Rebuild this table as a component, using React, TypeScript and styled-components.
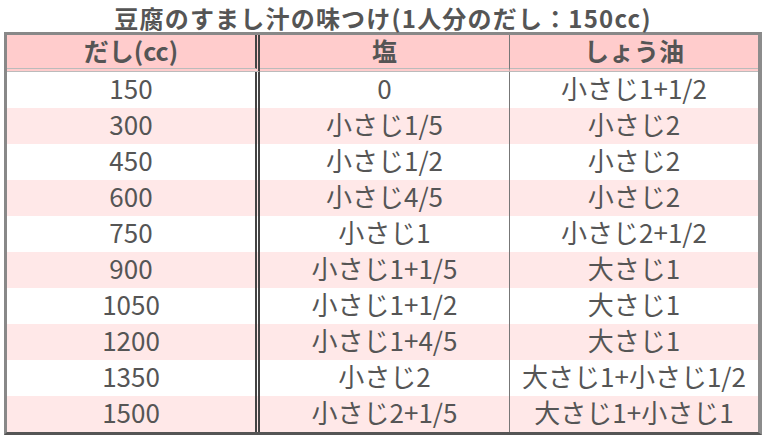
import React from "react";
import styled, { createGlobalStyle } from "styled-components";

type Row = [string, string, string];

const rows: Row[] = [
  ["150", "0", "小さじ1+1/2"],
  ["300", "小さじ1/5", "小さじ2"],
  ["450", "小さじ1/2", "小さじ2"],
  ["600", "小さじ4/5", "小さじ2"],
  ["750", "小さじ1", "小さじ2+1/2"],
  ["900", "小さじ1+1/5", "大さじ1"],
  ["1050", "小さじ1+1/2", "大さじ1"],
  ["1200", "小さじ1+4/5", "大さじ1"],
  ["1350", "小さじ2", "大さじ1+小さじ1/2"],
  ["1500", "小さじ2+1/5", "大さじ1+小さじ1"],
];

const App = () => {
  return (
    <>
      <GlobalStyle />
      <Page>
        <Title>豆腐のすまし汁の味つけ(1人分のだし：150cc)</Title>
        <Table>
          <colgroup>
            <col style={{ width: 253 }} />
            <col style={{ width: 250 }} />
            <col style={{ width: 248 }} />
          </colgroup>
          <thead>
            <tr>
              <HeadCell divider="double">だし(cc)</HeadCell>
              <HeadCell divider="single">塩</HeadCell>
              <HeadCell divider="none">しょう油</HeadCell>
            </tr>
          </thead>
          <tbody>
            {rows.map((r) => (
              <BodyRow key={r[0]}>
                <Cell divider="double">{r[0]}</Cell>
                <Cell divider="single">{r[1]}</Cell>
                <Cell divider="none">{r[2]}</Cell>
              </BodyRow>
            ))}
          </tbody>
        </Table>
      </Page>
    </>
  );
};

const GlobalStyle = createGlobalStyle`
  body {
    margin: 0;
    background: #ffffff;
    font-family: "Noto Sans CJK JP", "Noto Sans", sans-serif;
    color: #555555;
  }
`;

const Page = styled.div`
  width: 766px;
  padding: 0 4px;
  box-sizing: border-box;
`;

const Title = styled.h1`
  margin: 0;
  padding-top: 3px;
  font-size: 24px;
  line-height: 29px;
  font-weight: bold;
  text-align: center;
  color: #555555;
  letter-spacing: 1.2px;
  white-space: nowrap;
`;

const Table = styled.table`
  width: 758px;
  table-layout: fixed;
  border-collapse: separate;
  border-spacing: 0;
  border-style: solid;
  border-width: 3px 4px 3px 3px;
  border-color: #888888 #8c8c8c #555555 #888888;
`;

interface DividerProps {
  divider: "double" | "single" | "none";
}

const dividerStyle = (d: DividerProps["divider"]) =>
  d === "double"
    ? "border-right: 5px double #444444;"
    : d === "single"
    ? "border-right: 1px solid #777777;"
    : "";

const HeadCell = styled.th<DividerProps>`
  padding: 0;
  height: 33px;
  line-height: 31px;
  vertical-align: top;
  font-size: 25px;
  font-weight: bold;
  text-align: center;
  background: #ffcccc;
  color: #555555;
  border-bottom: 4px double #bbbbbb;
  ${(p) => dividerStyle(p.divider)}
`;

const BodyRow = styled.tr`
  background: #ffffff;
  &:nth-child(even) {
    background: #ffe8e8;
  }
`;

const Cell = styled.td<DividerProps>`
  padding: 0;
  height: 36px;
  line-height: 31px;
  vertical-align: top;
  font-size: 26px;
  text-align: center;
  color: #555555;
  white-space: nowrap;
  ${(p) => dividerStyle(p.divider)}
`;

export default App;
